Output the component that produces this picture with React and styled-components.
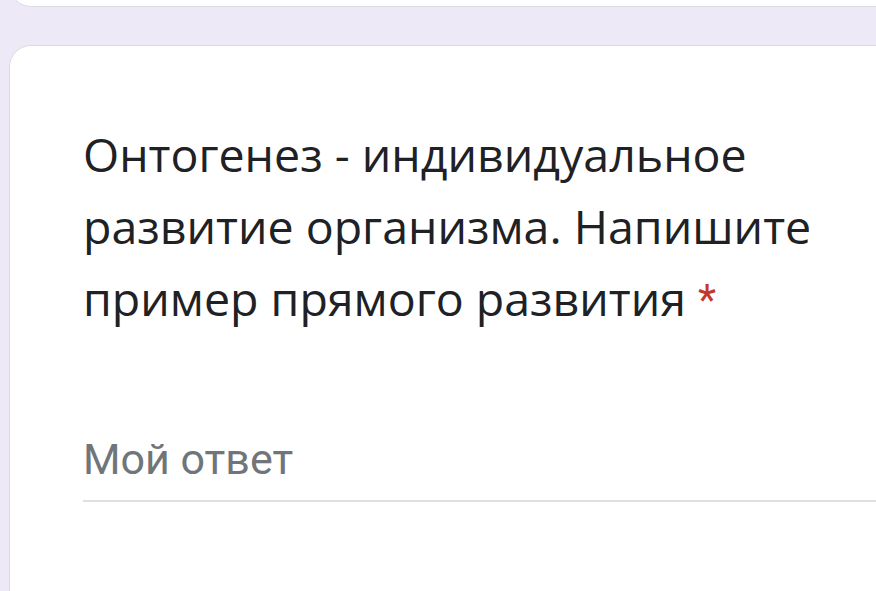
import React from "react";
import styled, { createGlobalStyle } from "styled-components";

const Global = createGlobalStyle`
  html, body { margin: 0; padding: 0; }
  body { background: #ede9f7; overflow: hidden; }
`;

const Page = styled.div`
  width: 876px;
  height: 591px;
  overflow: hidden;
  display: flex;
  flex-direction: column;
  gap: 38px;
  padding-left: 9px;
  box-sizing: border-box;
`;

const Card = styled.div`
  background: #fff;
  border: 1.5px solid #dadce0;
  border-radius: 22px;
  margin-right: -60px;
  flex-shrink: 0;
  box-sizing: border-box;
`;

const TopCard = styled(Card)`
  height: 60px;
  margin-top: -53px;
`;

const QuestionCard = styled(Card)`
  height: 620px;
  padding: 72px 0 0 73px;
`;

const Question = styled.div`
  font-family: "Open Sans", sans-serif;
  font-size: 46.5px;
  line-height: 72px;
  color: #202124;
  width: 740px;
`;

const Star = styled.span`
  display: inline-block;
  font-family: Roboto, sans-serif;
  font-size: 42px;
  line-height: 1;
  color: #c5372c;
  margin-left: 12px;
  vertical-align: 2px;
`;

const Answer = styled.div`
  margin-top: 100px;
  font-family: Roboto, sans-serif;
  font-size: 43px;
  line-height: 50px;
  color: #70757a;
  padding-bottom: 16px;
  border-bottom: 2px solid #e0e0e0;
`;

export default function App() {
  return (
    <>
      <Global />
      <Page>
        <TopCard />
        <QuestionCard>
          <Question>
            Онтогенез - индивидуальное развитие организма. Напишите пример
            прямого развития<Star>*</Star>
          </Question>
          <Answer>Мой ответ</Answer>
        </QuestionCard>
      </Page>
    </>
  );
}
